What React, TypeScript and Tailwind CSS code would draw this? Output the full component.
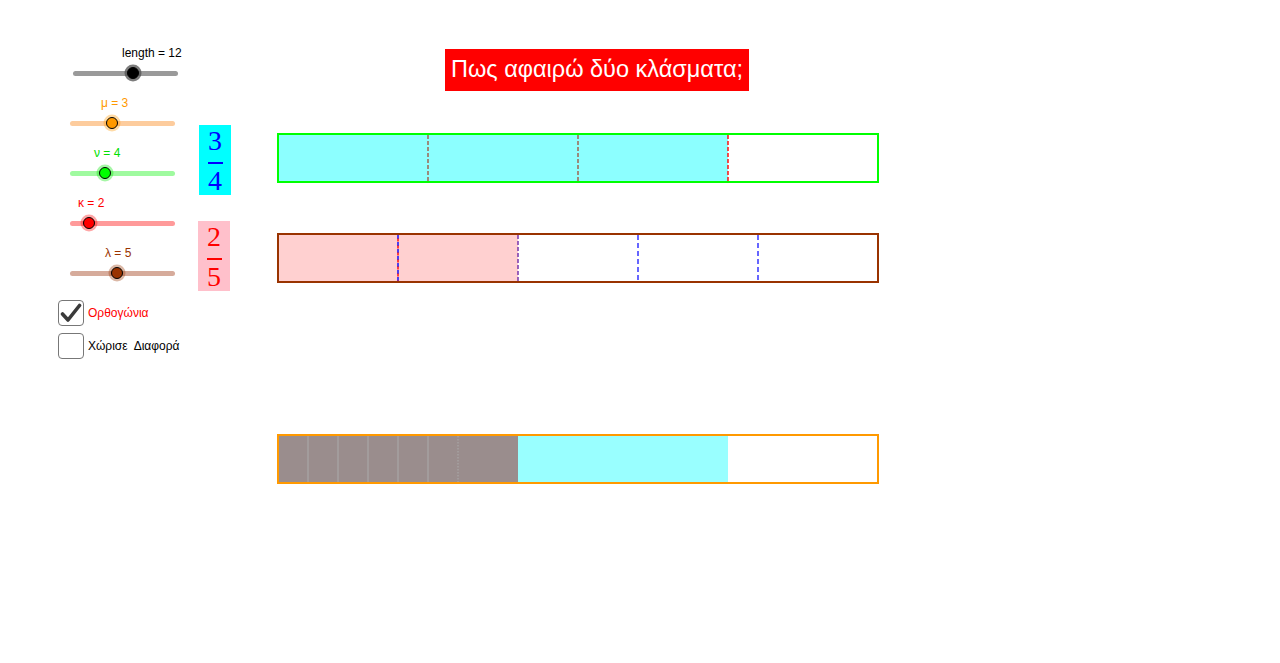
import React from "react";

type SliderProps = {
  label: string;
  labelLeft: string;
  labelColor: string;
  trackLeft: string;
  trackColor: string;
  knob: number;
  knobFill: string;
  knobHalo: string;
  knobStroke: string;
};

const sliders: SliderProps[] = [
  {
    label: "length = 12",
    labelLeft: "ml-[64px]",
    labelColor: "text-black",
    trackLeft: "ml-[15px]",
    trackColor: "bg-[#9a9a9a]",
    knob: 60,
    knobFill: "#000000",
    knobHalo: "rgba(80,80,80,0.75)",
    knobStroke: "#000000",
  },
  {
    label: "μ = 3",
    labelLeft: "ml-[43px]",
    labelColor: "text-[#ff9900]",
    trackLeft: "ml-[12px]",
    trackColor: "bg-[#fdcc9d]",
    knob: 42,
    knobFill: "#ff9900",
    knobHalo: "rgba(255,153,0,0.35)",
    knobStroke: "#000000",
  },
  {
    label: "ν = 4",
    labelLeft: "ml-[36px]",
    labelColor: "text-[#00e000]",
    trackLeft: "ml-[12px]",
    trackColor: "bg-[#9ffa9f]",
    knob: 35,
    knobFill: "#00ff00",
    knobHalo: "rgba(0,230,0,0.35)",
    knobStroke: "#000000",
  },
  {
    label: "κ = 2",
    labelLeft: "ml-[20px]",
    labelColor: "text-[#ff0000]",
    trackLeft: "ml-[12px]",
    trackColor: "bg-[#ff9a9a]",
    knob: 19,
    knobFill: "#ff0000",
    knobHalo: "rgba(255,0,0,0.35)",
    knobStroke: "#000000",
  },
  {
    label: "λ = 5",
    labelLeft: "ml-[47px]",
    labelColor: "text-[#993300]",
    trackLeft: "ml-[12px]",
    trackColor: "bg-[#d6ab9b]",
    knob: 47,
    knobFill: "#993300",
    knobHalo: "rgba(153,51,0,0.35)",
    knobStroke: "#000000",
  },
];

function Slider(s: SliderProps) {
  return (
    <div className="h-[50px]">
      <p className={`${s.labelLeft} ${s.labelColor} text-[12px] leading-[14px] whitespace-nowrap`}>
        {s.label}
      </p>
      <div className={`${s.trackLeft} relative mt-[4px] flex h-[18px] w-[105px] items-center`}>
        <div className={`h-[5px] w-full rounded-full ${s.trackColor}`} />
        <svg
          width="18"
          height="18"
          viewBox="0 0 18 18"
          className="absolute top-0"
          style={{ left: s.knob - 9 }}
        >
          <circle cx="9" cy="9" r="8.5" fill={s.knobHalo} />
          <circle cx="9" cy="9" r="5.5" fill={s.knobFill} stroke={s.knobStroke} strokeWidth="1" />
        </svg>
      </div>
    </div>
  );
}

function CheckBox({ checked, label, color }: { checked: boolean; label: string; color: string }) {
  return (
    <div className="flex h-[26px] items-center">
      <div className="flex h-[26px] w-[26px] items-center justify-center rounded-[4px] border-[1.5px] border-[#777]">
        {checked && (
          <svg width="22" height="22" viewBox="0 0 22 22">
            <path d="M2.5 12 L8 18 L19.5 3.5" fill="none" stroke="#3a3a3a" strokeWidth="3.6" strokeLinecap="round" strokeLinejoin="round" />
          </svg>
        )}
      </div>
      <span className={`ml-[4px] whitespace-pre text-[12px] ${color}`}>{label}</span>
    </div>
  );
}

function Fraction({ top, bottom, box, ink, line, ml }: { top: string; bottom: string; box: string; ink: string; line: string; ml: string }) {
  return (
    <div className={`${ml} ${box} flex h-[70px] w-[32px] flex-col items-center pt-[3px] font-['Liberation_Serif',serif] ${ink}`}>
      <span className="text-[28px] leading-[26px]">{top}</span>
      <div className={`mt-[8px] h-[1.5px] w-[15px] ${line}`} />
      <span className="mt-[4px] text-[28px] leading-[26px]">{bottom}</span>
    </div>
  );
}

const W = 602;
const H = 50;

function TopBar() {
  const step = 600 / 4;
  return (
    <svg width={W} height={H} className="block">
      <rect x="1" y="1" width={step * 3} height="48" fill="#8cffff" />
      {[1, 2].map((i) => (
        <line key={i} x1={1 + step * i} y1="2" x2={1 + step * i} y2="48" stroke="#a05a46" strokeWidth="1.4" strokeDasharray="4 2" />
      ))}
      <line x1={1 + step * 3} y1="2" x2={1 + step * 3} y2="48" stroke="#ff0000" strokeWidth="1.4" strokeDasharray="4 2" />
      <rect x="1" y="1" width="600" height="48" fill="none" stroke="#00ff00" strokeWidth="2" />
    </svg>
  );
}

function MidBar() {
  const step = 600 / 5;
  return (
    <svg width={W} height={H} className="block">
      <rect x="1" y="1" width={step * 2} height="48" fill="#ffd0d0" />
      <line x1={1 + step} y1="2" x2={1 + step} y2="48" stroke="#0000ff" strokeWidth="1.4" strokeDasharray="4 3" />
      <line x1={1 + step} y1="2" x2={1 + step} y2="48" stroke="#ff0000" strokeWidth="1.4" strokeDasharray="3 4" strokeDashoffset="3.5" />
      <line x1={1 + step * 2} y1="2" x2={1 + step * 2} y2="48" stroke="#8040b0" strokeWidth="1.6" strokeDasharray="4 2" />
      {[3, 4].map((i) => (
        <line key={i} x1={1 + step * i} y1="2" x2={1 + step * i} y2="48" stroke="#0000ff" strokeWidth="1.2" strokeDasharray="5 3" />
      ))}
      <rect x="1" y="1" width="600" height="48" fill="none" stroke="#993300" strokeWidth="2" />
    </svg>
  );
}

function DiffBar() {
  const small = 600 / 20;
  return (
    <svg width={W} height={H} className="block">
      <rect x="1" y="1" width={small * 8} height="48" fill="#9a8d8d" />
      <rect x={1 + small * 8} y="1" width={small * 7} height="48" fill="#99ffff" />
      {[1, 2, 3, 4, 5].map((i) => (
        <line key={i} x1={1 + small * i} y1="2" x2={1 + small * i} y2="48" stroke="#ababab" strokeWidth="1" />
      ))}
      <line x1={1 + small * 6} y1="2" x2={1 + small * 6} y2="48" stroke="#ababab" strokeWidth="1" strokeDasharray="1.5 1.5" />
      <rect x="1" y="1" width="600" height="48" fill="none" stroke="#ff9900" strokeWidth="2" />
    </svg>
  );
}

export default function App() {
  return (
    <div className="flex h-[663px] w-[1280px] overflow-hidden bg-white font-['Liberation_Sans',Arial,sans-serif]">
      <div className="ml-[58px] flex w-[140px] flex-col pt-[46px]">
        {sliders.map((s) => (
          <Slider key={s.label} {...s} />
        ))}
        <div className="mt-[4px] flex flex-col gap-[7px]">
          <CheckBox checked label="Ορθογώνια" color="text-[#ff0000]" />
          <CheckBox checked={false} label="Χώρισε  Διαφορά" color="text-black" />
        </div>
      </div>

      <div className="flex w-[33px] flex-col gap-[26px] pt-[125px]">
        <Fraction top="3" bottom="4" box="bg-[#00ffff]" ink="text-[#0000ff]" line="bg-[#0000ff]" ml="ml-[1px]" />
        <Fraction top="2" bottom="5" box="bg-[#ffc0cb]" ink="text-[#ff0000]" line="bg-[#ff0000]" ml="ml-0" />
      </div>

      <div className="ml-[46px] flex flex-col pt-[49px]">
        <div className="ml-[168px] flex h-[42px] w-[304px] items-center justify-center bg-[#ff0000] text-[23.5px] whitespace-nowrap text-white">
          Πως αφαιρώ δύο κλάσματα;
        </div>
        <div className="mt-[42px]">
          <TopBar />
        </div>
        <div className="mt-[50px]">
          <MidBar />
        </div>
        <div className="mt-[151px]">
          <DiffBar />
        </div>
      </div>
    </div>
  );
}
